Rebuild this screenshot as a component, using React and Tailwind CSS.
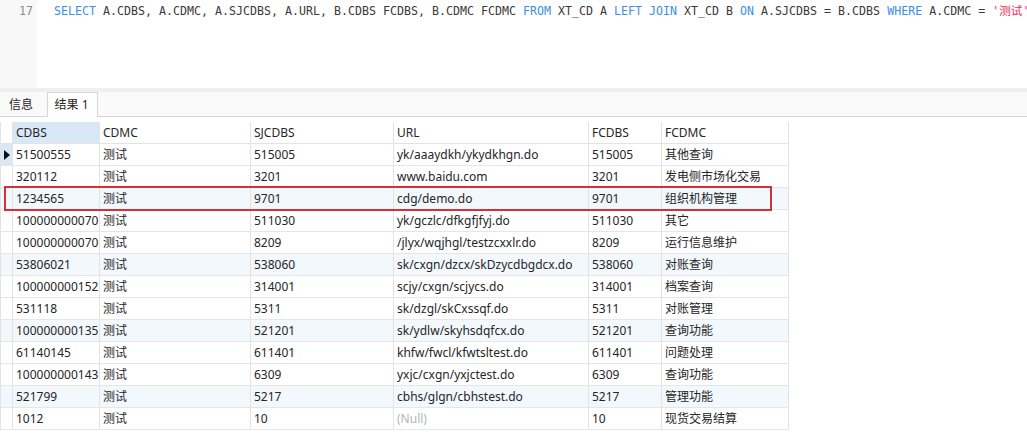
const columns = [
  { key: 'cdbs', title: 'CDBS', width: 'w-[87px]' },
  { key: 'cdmc', title: 'CDMC', width: 'w-[151px]' },
  { key: 'sjcdbs', title: 'SJCDBS', width: 'w-[143px]' },
  { key: 'url', title: 'URL', width: 'w-[195px]' },
  { key: 'fcdbs', title: 'FCDBS', width: 'w-[73px]' },
  { key: 'fcdmc', title: 'FCDMC', width: 'w-[127px]' },
];

const rows = [
  ['51500555', '测试', '515005', 'yk/aaaydkh/ykydkhgn.do', '515005', '其他查询'],
  ['320112', '测试', '3201', 'www.baidu.com', '3201', '发电侧市场化交易'],
  ['1234565', '测试', '9701', 'cdg/demo.do', '9701', '组织机构管理'],
  ['100000000070', '测试', '511030', 'yk/gczlc/dfkgfjfyj.do', '511030', '其它'],
  ['100000000070', '测试', '8209', '/jlyx/wqjhgl/testzcxxlr.do', '8209', '运行信息维护'],
  ['53806021', '测试', '538060', 'sk/cxgn/dzcx/skDzycdbgdcx.do', '538060', '对账查询'],
  ['100000000152', '测试', '314001', 'scjy/cxgn/scjycs.do', '314001', '档案查询'],
  ['531118', '测试', '5311', 'sk/dzgl/skCxssqf.do', '5311', '对账管理'],
  ['100000000135', '测试', '521201', 'sk/ydlw/skyhsdqfcx.do', '521201', '查询功能'],
  ['61140145', '测试', '611401', 'khfw/fwcl/kfwtsltest.do', '611401', '问题处理'],
  ['100000000143', '测试', '6309', 'yxjc/cxgn/yxjctest.do', '6309', '查询功能'],
  ['521799', '测试', '5217', 'cbhs/glgn/cbhstest.do', '5217', '管理功能'],
  ['1012', '测试', '10', null, '10', '现货交易结算'],
];

// keyword / plain / string pieces of the query line
const sql = [
  ['k', 'SELECT'],
  ['t', ' A.CDBS, A.CDMC, A.SJCDBS, A.URL, B.CDBS FCDBS, B.CDMC FCDMC '],
  ['k', 'FROM'],
  ['t', ' XT_CD A '],
  ['k', 'LEFT JOIN'],
  ['t', ' XT_CD B '],
  ['k', 'ON'],
  ['t', ' A.SJCDBS = B.CDBS '],
  ['k', 'WHERE'],
  ['t', ' A.CDMC = '],
  ['s', "'测试'"],
];

function Editor() {
  return (
    <div className="flex h-[88px] bg-white">
      <div className="w-[37px] shrink-0 bg-[#f8f8f8] pt-[4px] pr-[4px] text-right font-['DejaVu_Sans_Mono',monospace] text-[11.6px] leading-[15px] text-[#8a8a8a]">
        17
      </div>
      <div className="pl-[17px] pt-[4px] whitespace-pre font-['DejaVu_Sans_Mono','Noto_Sans_CJK_SC',monospace] text-[11.6px] leading-[15px] tracking-[0.02px] text-[#3a3a3a]">
        {sql.map(([type, text], i) => (
          <span
            key={i}
            className={
              type === 'k'
                ? 'text-[#3b8ee3]'
                : type === 's'
                ? 'text-[#e3325a]'
                : ''
            }
          >
            {text}
          </span>
        ))}
      </div>
    </div>
  );
}

function Tabs() {
  return (
    <div className="flex h-[25px] items-end border-b border-[#d6d6d6] bg-[#fafafa] pl-[8px]">
      <div className="flex h-[23px] items-center pr-[14px] pl-[1px] text-[#262626]">信息</div>
      <div className="-mb-px flex h-[25px] w-[51px] items-center justify-center border border-b-0 border-[#d6d6d6] bg-white pr-[2px] text-[#262626]">
        结果 1
      </div>
    </div>
  );
}

function Grid() {
  return (
    <div className="pt-[5px]">
      <div className="w-[789px] border-l border-[#e3e3e3]">
        {/* header */}
        <div className="flex h-[22px] border-b border-[#e3e3e3]">
          <div className="w-[12px] shrink-0 border-r border-[#e3e3e3]" />
          {columns.map((c, i) => (
            <div
              key={c.key}
              className={`${c.width} shrink-0 border-r border-[#e3e3e3] pl-[3px] leading-[21px] ${
                i === 0 ? 'bg-[#d9e8f6]' : ''
              }`}
            >
              {c.title}
            </div>
          ))}
        </div>

        {rows.map((r, idx) => (
          <div
            key={idx}
            className={`flex h-[22px] border-b border-[#e6e6e6] ${
              idx % 3 === 2 ? 'bg-[#f3f8fd]' : 'bg-white'
            }`}
          >
            <div
              className={`flex w-[12px] shrink-0 items-center justify-center border-r border-[#e3e3e3] ${
                idx === 0 ? 'bg-[#d9e8f6]' : ''
              }`}
            >
              {idx === 0 && (
                <svg width="6" height="10" viewBox="0 0 6 10">
                  <path d="M0 0 L6 5 L0 10 Z" fill="#111" />
                </svg>
              )}
            </div>
            {columns.map((c, i) => (
              <div
                key={c.key}
                className={`${c.width} shrink-0 overflow-hidden whitespace-nowrap border-r border-[#e3e3e3] pl-[3px] leading-[21px]`}
              >
                {r[i] === null ? <span className="text-[#b5b5b5]">(Null)</span> : r[i]}
              </div>
            ))}
          </div>
        ))}
      </div>
    </div>
  );
}

export default function App() {
  return (
    <div className="relative h-[437px] w-[1027px] overflow-hidden bg-white font-['Noto_Sans','Noto_Sans_CJK_SC',sans-serif] text-[12px] text-[#262626]">
      <Editor />
      <div className="h-[4px] bg-[#efefef]" />
      <Tabs />
      <Grid />

      {/* highlighted row marker */}
      <div className="absolute left-[4px] top-[186px] h-[25px] w-[768px] border-2 border-[#d3303b]" />
    </div>
  );
}
